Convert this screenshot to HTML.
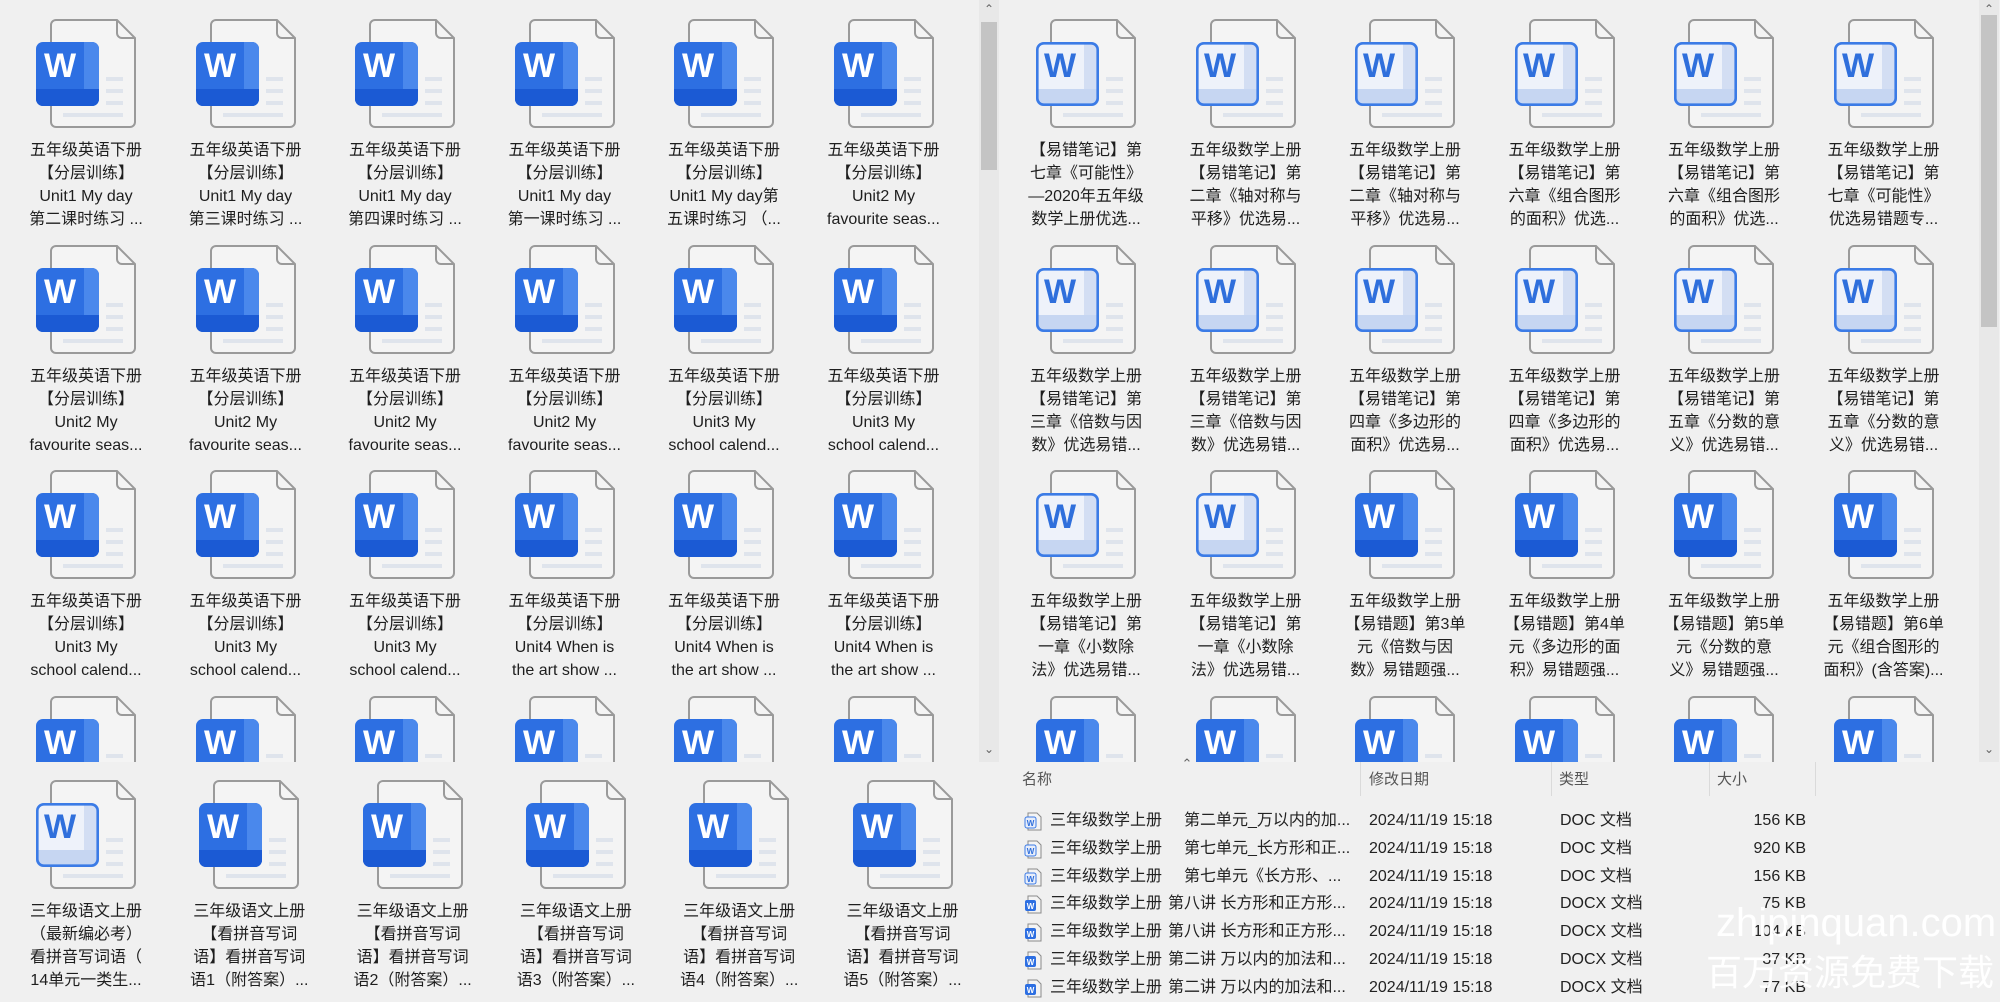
<!DOCTYPE html>
<html><head><meta charset="utf-8">
<style>
*{margin:0;padding:0;box-sizing:border-box}
body{width:2000px;height:1000px;background:#f0f0f0;position:relative;overflow:hidden;font-family:"Liberation Sans","Noto Sans CJK SC",sans-serif;color:#1e1e1e}
.pan{position:absolute;top:0;height:762px;width:980px;overflow:hidden}
.ic{position:absolute;width:100px;height:110px;overflow:visible}
.t{position:absolute;width:150px;text-align:center;font-size:16px;line-height:23px;white-space:nowrap}
.sb{position:absolute;top:0;width:20px;height:762px;background:#e8e8e8}
.th{position:absolute;left:2px;width:16px;background:#c4c4c4}
.ar{position:absolute;left:0;width:20px;text-align:center;font-size:12px;color:#666}
.h{position:absolute;font-size:15px;color:#555;top:768px}
.sep{position:absolute;top:762px;width:1px;height:34px;background:#dadada}
.r{position:absolute;font-size:16px;line-height:28px;white-space:nowrap;color:#222}
.wm{position:absolute;color:rgba(255,255,255,.95);white-space:nowrap}
</style></head><body>
<svg width="0" height="0" style="position:absolute">
<defs>
<clipPath id="cb"><rect x="0" y="23" width="63" height="64" rx="7"/></clipPath>
<symbol id="ps" viewBox="0 0 100 110" overflow="visible">
<path d="M20 1H81L99 19V103a5 5 0 0 1-5 5H20a5 5 0 0 1-5-5V6a5 5 0 0 1 5-5Z" fill="#f4f4f4" stroke="#9a9a9a" stroke-width="2"/>
<path d="M81 1V14a5 5 0 0 0 5 5H99" fill="none" stroke="#9a9a9a" stroke-width="2"/>
<rect x="70" y="58" width="17" height="4" fill="#dfe4ec"/><rect x="70" y="70" width="17" height="4" fill="#dfe4ec"/><rect x="70" y="82" width="17" height="4" fill="#dfe4ec"/><rect x="27" y="94" width="60" height="4" fill="#dfe4ec"/>
</symbol>
<symbol id="bs" viewBox="0 0 100 110" overflow="visible">
<g clip-path="url(#cb)"><rect x="0" y="23" width="63" height="64" fill="#2d6fe2"/><rect x="48" y="23" width="15" height="64" fill="#4a88ec"/><rect x="0" y="70" width="63" height="17" fill="#1b5ad4"/></g>
</symbol>
<symbol id="bo" viewBox="0 0 100 110" overflow="visible">
<g clip-path="url(#cb)"><rect x="0" y="23" width="63" height="64" fill="#eef2fa"/><rect x="48" y="23" width="15" height="64" fill="#d3def3"/><rect x="0" y="70" width="63" height="17" fill="#c6d6f2"/></g>
<rect x="1.3" y="24.3" width="60.4" height="61.4" rx="6.5" fill="none" stroke="#3b7be6" stroke-width="2.6"/>
</symbol>
<symbol id="sm" viewBox="0 0 20 20"><path d="M5 1H14L18 5V18H5Z" fill="#f4f4f4" stroke="#8a8a8a"/><rect x="2" y="5" width="11" height="11" rx="2" fill="#e8eefa" stroke="#3b7be6"/></symbol>
</defs></svg>

<!-- LEFT PANEL -->
<div class="pan" style="left:0">
<svg class="ic" style="left:36px;top:19px"><use href="#ps"/><use href="#bs"/><text x="24" y="58" font-size="34" font-weight="bold" fill="#fff" text-anchor="middle" font-family="Liberation Sans">W</text></svg>
<svg class="ic" style="left:195.5px;top:19px"><use href="#ps"/><use href="#bs"/><text x="24" y="58" font-size="34" font-weight="bold" fill="#fff" text-anchor="middle" font-family="Liberation Sans">W</text></svg>
<svg class="ic" style="left:355px;top:19px"><use href="#ps"/><use href="#bs"/><text x="24" y="58" font-size="34" font-weight="bold" fill="#fff" text-anchor="middle" font-family="Liberation Sans">W</text></svg>
<svg class="ic" style="left:514.5px;top:19px"><use href="#ps"/><use href="#bs"/><text x="24" y="58" font-size="34" font-weight="bold" fill="#fff" text-anchor="middle" font-family="Liberation Sans">W</text></svg>
<svg class="ic" style="left:674px;top:19px"><use href="#ps"/><use href="#bs"/><text x="24" y="58" font-size="34" font-weight="bold" fill="#fff" text-anchor="middle" font-family="Liberation Sans">W</text></svg>
<svg class="ic" style="left:833.5px;top:19px"><use href="#ps"/><use href="#bs"/><text x="24" y="58" font-size="34" font-weight="bold" fill="#fff" text-anchor="middle" font-family="Liberation Sans">W</text></svg>
<div class="t" style="left:11px;top:139px">五年级英语下册<br>【分层训练】<br>Unit1 My day<br>第二课时练习 ...</div>
<div class="t" style="left:170.5px;top:139px">五年级英语下册<br>【分层训练】<br>Unit1 My day<br>第三课时练习 ...</div>
<div class="t" style="left:330px;top:139px">五年级英语下册<br>【分层训练】<br>Unit1 My day<br>第四课时练习 ...</div>
<div class="t" style="left:489.5px;top:139px">五年级英语下册<br>【分层训练】<br>Unit1 My day<br>第一课时练习 ...</div>
<div class="t" style="left:649px;top:139px">五年级英语下册<br>【分层训练】<br>Unit1 My day第<br>五课时练习 （...</div>
<div class="t" style="left:808.5px;top:139px">五年级英语下册<br>【分层训练】<br>Unit2 My<br>favourite seas...</div>

<svg class="ic" style="left:36px;top:244.5px"><use href="#ps"/><use href="#bs"/><text x="24" y="58" font-size="34" font-weight="bold" fill="#fff" text-anchor="middle" font-family="Liberation Sans">W</text></svg>
<svg class="ic" style="left:195.5px;top:244.5px"><use href="#ps"/><use href="#bs"/><text x="24" y="58" font-size="34" font-weight="bold" fill="#fff" text-anchor="middle" font-family="Liberation Sans">W</text></svg>
<svg class="ic" style="left:355px;top:244.5px"><use href="#ps"/><use href="#bs"/><text x="24" y="58" font-size="34" font-weight="bold" fill="#fff" text-anchor="middle" font-family="Liberation Sans">W</text></svg>
<svg class="ic" style="left:514.5px;top:244.5px"><use href="#ps"/><use href="#bs"/><text x="24" y="58" font-size="34" font-weight="bold" fill="#fff" text-anchor="middle" font-family="Liberation Sans">W</text></svg>
<svg class="ic" style="left:674px;top:244.5px"><use href="#ps"/><use href="#bs"/><text x="24" y="58" font-size="34" font-weight="bold" fill="#fff" text-anchor="middle" font-family="Liberation Sans">W</text></svg>
<svg class="ic" style="left:833.5px;top:244.5px"><use href="#ps"/><use href="#bs"/><text x="24" y="58" font-size="34" font-weight="bold" fill="#fff" text-anchor="middle" font-family="Liberation Sans">W</text></svg>
<div class="t" style="left:11px;top:364.5px">五年级英语下册<br>【分层训练】<br>Unit2 My<br>favourite seas...</div>
<div class="t" style="left:170.5px;top:364.5px">五年级英语下册<br>【分层训练】<br>Unit2 My<br>favourite seas...</div>
<div class="t" style="left:330px;top:364.5px">五年级英语下册<br>【分层训练】<br>Unit2 My<br>favourite seas...</div>
<div class="t" style="left:489.5px;top:364.5px">五年级英语下册<br>【分层训练】<br>Unit2 My<br>favourite seas...</div>
<div class="t" style="left:649px;top:364.5px">五年级英语下册<br>【分层训练】<br>Unit3 My<br>school calend...</div>
<div class="t" style="left:808.5px;top:364.5px">五年级英语下册<br>【分层训练】<br>Unit3 My<br>school calend...</div>

<svg class="ic" style="left:36px;top:470px"><use href="#ps"/><use href="#bs"/><text x="24" y="58" font-size="34" font-weight="bold" fill="#fff" text-anchor="middle" font-family="Liberation Sans">W</text></svg>
<svg class="ic" style="left:195.5px;top:470px"><use href="#ps"/><use href="#bs"/><text x="24" y="58" font-size="34" font-weight="bold" fill="#fff" text-anchor="middle" font-family="Liberation Sans">W</text></svg>
<svg class="ic" style="left:355px;top:470px"><use href="#ps"/><use href="#bs"/><text x="24" y="58" font-size="34" font-weight="bold" fill="#fff" text-anchor="middle" font-family="Liberation Sans">W</text></svg>
<svg class="ic" style="left:514.5px;top:470px"><use href="#ps"/><use href="#bs"/><text x="24" y="58" font-size="34" font-weight="bold" fill="#fff" text-anchor="middle" font-family="Liberation Sans">W</text></svg>
<svg class="ic" style="left:674px;top:470px"><use href="#ps"/><use href="#bs"/><text x="24" y="58" font-size="34" font-weight="bold" fill="#fff" text-anchor="middle" font-family="Liberation Sans">W</text></svg>
<svg class="ic" style="left:833.5px;top:470px"><use href="#ps"/><use href="#bs"/><text x="24" y="58" font-size="34" font-weight="bold" fill="#fff" text-anchor="middle" font-family="Liberation Sans">W</text></svg>
<div class="t" style="left:11px;top:590px">五年级英语下册<br>【分层训练】<br>Unit3 My<br>school calend...</div>
<div class="t" style="left:170.5px;top:590px">五年级英语下册<br>【分层训练】<br>Unit3 My<br>school calend...</div>
<div class="t" style="left:330px;top:590px">五年级英语下册<br>【分层训练】<br>Unit3 My<br>school calend...</div>
<div class="t" style="left:489.5px;top:590px">五年级英语下册<br>【分层训练】<br>Unit4 When is<br>the art show ...</div>
<div class="t" style="left:649px;top:590px">五年级英语下册<br>【分层训练】<br>Unit4 When is<br>the art show ...</div>
<div class="t" style="left:808.5px;top:590px">五年级英语下册<br>【分层训练】<br>Unit4 When is<br>the art show ...</div>

<svg class="ic" style="left:36px;top:695.5px"><use href="#ps"/><use href="#bs"/><text x="24" y="58" font-size="34" font-weight="bold" fill="#fff" text-anchor="middle" font-family="Liberation Sans">W</text></svg>
<svg class="ic" style="left:195.5px;top:695.5px"><use href="#ps"/><use href="#bs"/><text x="24" y="58" font-size="34" font-weight="bold" fill="#fff" text-anchor="middle" font-family="Liberation Sans">W</text></svg>
<svg class="ic" style="left:355px;top:695.5px"><use href="#ps"/><use href="#bs"/><text x="24" y="58" font-size="34" font-weight="bold" fill="#fff" text-anchor="middle" font-family="Liberation Sans">W</text></svg>
<svg class="ic" style="left:514.5px;top:695.5px"><use href="#ps"/><use href="#bs"/><text x="24" y="58" font-size="34" font-weight="bold" fill="#fff" text-anchor="middle" font-family="Liberation Sans">W</text></svg>
<svg class="ic" style="left:674px;top:695.5px"><use href="#ps"/><use href="#bs"/><text x="24" y="58" font-size="34" font-weight="bold" fill="#fff" text-anchor="middle" font-family="Liberation Sans">W</text></svg>
<svg class="ic" style="left:833.5px;top:695.5px"><use href="#ps"/><use href="#bs"/><text x="24" y="58" font-size="34" font-weight="bold" fill="#fff" text-anchor="middle" font-family="Liberation Sans">W</text></svg>
</div>
<div class="sb" style="left:979px"><div class="ar" style="top:2px">&#8963;</div><div class="th" style="top:22px;height:148px"></div><div class="ar" style="top:742px">&#8964;</div></div>

<!-- RIGHT PANEL -->
<div class="pan" style="left:1000px">
<svg class="ic" style="left:36px;top:19px"><use href="#ps"/><use href="#bo"/><text x="24" y="58" font-size="34" font-weight="bold" fill="#2f6fdc" text-anchor="middle" font-family="Liberation Sans">W</text></svg>
<svg class="ic" style="left:195.5px;top:19px"><use href="#ps"/><use href="#bo"/><text x="24" y="58" font-size="34" font-weight="bold" fill="#2f6fdc" text-anchor="middle" font-family="Liberation Sans">W</text></svg>
<svg class="ic" style="left:355px;top:19px"><use href="#ps"/><use href="#bo"/><text x="24" y="58" font-size="34" font-weight="bold" fill="#2f6fdc" text-anchor="middle" font-family="Liberation Sans">W</text></svg>
<svg class="ic" style="left:514.5px;top:19px"><use href="#ps"/><use href="#bo"/><text x="24" y="58" font-size="34" font-weight="bold" fill="#2f6fdc" text-anchor="middle" font-family="Liberation Sans">W</text></svg>
<svg class="ic" style="left:674px;top:19px"><use href="#ps"/><use href="#bo"/><text x="24" y="58" font-size="34" font-weight="bold" fill="#2f6fdc" text-anchor="middle" font-family="Liberation Sans">W</text></svg>
<svg class="ic" style="left:833.5px;top:19px"><use href="#ps"/><use href="#bo"/><text x="24" y="58" font-size="34" font-weight="bold" fill="#2f6fdc" text-anchor="middle" font-family="Liberation Sans">W</text></svg>
<div class="t" style="left:11px;top:139px">【易错笔记】第<br>七章《可能性》<br>—2020年五年级<br>数学上册优选...</div>
<div class="t" style="left:170.5px;top:139px">五年级数学上册<br>【易错笔记】第<br>二章《轴对称与<br>平移》优选易...</div>
<div class="t" style="left:330px;top:139px">五年级数学上册<br>【易错笔记】第<br>二章《轴对称与<br>平移》优选易...</div>
<div class="t" style="left:489.5px;top:139px">五年级数学上册<br>【易错笔记】第<br>六章《组合图形<br>的面积》优选...</div>
<div class="t" style="left:649px;top:139px">五年级数学上册<br>【易错笔记】第<br>六章《组合图形<br>的面积》优选...</div>
<div class="t" style="left:808.5px;top:139px">五年级数学上册<br>【易错笔记】第<br>七章《可能性》<br>优选易错题专...</div>

<svg class="ic" style="left:36px;top:244.5px"><use href="#ps"/><use href="#bo"/><text x="24" y="58" font-size="34" font-weight="bold" fill="#2f6fdc" text-anchor="middle" font-family="Liberation Sans">W</text></svg>
<svg class="ic" style="left:195.5px;top:244.5px"><use href="#ps"/><use href="#bo"/><text x="24" y="58" font-size="34" font-weight="bold" fill="#2f6fdc" text-anchor="middle" font-family="Liberation Sans">W</text></svg>
<svg class="ic" style="left:355px;top:244.5px"><use href="#ps"/><use href="#bo"/><text x="24" y="58" font-size="34" font-weight="bold" fill="#2f6fdc" text-anchor="middle" font-family="Liberation Sans">W</text></svg>
<svg class="ic" style="left:514.5px;top:244.5px"><use href="#ps"/><use href="#bo"/><text x="24" y="58" font-size="34" font-weight="bold" fill="#2f6fdc" text-anchor="middle" font-family="Liberation Sans">W</text></svg>
<svg class="ic" style="left:674px;top:244.5px"><use href="#ps"/><use href="#bo"/><text x="24" y="58" font-size="34" font-weight="bold" fill="#2f6fdc" text-anchor="middle" font-family="Liberation Sans">W</text></svg>
<svg class="ic" style="left:833.5px;top:244.5px"><use href="#ps"/><use href="#bo"/><text x="24" y="58" font-size="34" font-weight="bold" fill="#2f6fdc" text-anchor="middle" font-family="Liberation Sans">W</text></svg>
<div class="t" style="left:11px;top:364.5px">五年级数学上册<br>【易错笔记】第<br>三章《倍数与因<br>数》优选易错...</div>
<div class="t" style="left:170.5px;top:364.5px">五年级数学上册<br>【易错笔记】第<br>三章《倍数与因<br>数》优选易错...</div>
<div class="t" style="left:330px;top:364.5px">五年级数学上册<br>【易错笔记】第<br>四章《多边形的<br>面积》优选易...</div>
<div class="t" style="left:489.5px;top:364.5px">五年级数学上册<br>【易错笔记】第<br>四章《多边形的<br>面积》优选易...</div>
<div class="t" style="left:649px;top:364.5px">五年级数学上册<br>【易错笔记】第<br>五章《分数的意<br>义》优选易错...</div>
<div class="t" style="left:808.5px;top:364.5px">五年级数学上册<br>【易错笔记】第<br>五章《分数的意<br>义》优选易错...</div>

<svg class="ic" style="left:36px;top:470px"><use href="#ps"/><use href="#bo"/><text x="24" y="58" font-size="34" font-weight="bold" fill="#2f6fdc" text-anchor="middle" font-family="Liberation Sans">W</text></svg>
<svg class="ic" style="left:195.5px;top:470px"><use href="#ps"/><use href="#bo"/><text x="24" y="58" font-size="34" font-weight="bold" fill="#2f6fdc" text-anchor="middle" font-family="Liberation Sans">W</text></svg>
<svg class="ic" style="left:355px;top:470px"><use href="#ps"/><use href="#bs"/><text x="24" y="58" font-size="34" font-weight="bold" fill="#fff" text-anchor="middle" font-family="Liberation Sans">W</text></svg>
<svg class="ic" style="left:514.5px;top:470px"><use href="#ps"/><use href="#bs"/><text x="24" y="58" font-size="34" font-weight="bold" fill="#fff" text-anchor="middle" font-family="Liberation Sans">W</text></svg>
<svg class="ic" style="left:674px;top:470px"><use href="#ps"/><use href="#bs"/><text x="24" y="58" font-size="34" font-weight="bold" fill="#fff" text-anchor="middle" font-family="Liberation Sans">W</text></svg>
<svg class="ic" style="left:833.5px;top:470px"><use href="#ps"/><use href="#bs"/><text x="24" y="58" font-size="34" font-weight="bold" fill="#fff" text-anchor="middle" font-family="Liberation Sans">W</text></svg>
<div class="t" style="left:11px;top:590px">五年级数学上册<br>【易错笔记】第<br>一章《小数除<br>法》优选易错...</div>
<div class="t" style="left:170.5px;top:590px">五年级数学上册<br>【易错笔记】第<br>一章《小数除<br>法》优选易错...</div>
<div class="t" style="left:330px;top:590px">五年级数学上册<br>【易错题】第3单<br>元《倍数与因<br>数》易错题强...</div>
<div class="t" style="left:489.5px;top:590px">五年级数学上册<br>【易错题】第4单<br>元《多边形的面<br>积》易错题强...</div>
<div class="t" style="left:649px;top:590px">五年级数学上册<br>【易错题】第5单<br>元《分数的意<br>义》易错题强...</div>
<div class="t" style="left:808.5px;top:590px">五年级数学上册<br>【易错题】第6单<br>元《组合图形的<br>面积》(含答案)...</div>

<svg class="ic" style="left:36px;top:695.5px"><use href="#ps"/><use href="#bs"/><text x="24" y="58" font-size="34" font-weight="bold" fill="#fff" text-anchor="middle" font-family="Liberation Sans">W</text></svg>
<svg class="ic" style="left:195.5px;top:695.5px"><use href="#ps"/><use href="#bs"/><text x="24" y="58" font-size="34" font-weight="bold" fill="#fff" text-anchor="middle" font-family="Liberation Sans">W</text></svg>
<svg class="ic" style="left:355px;top:695.5px"><use href="#ps"/><use href="#bs"/><text x="24" y="58" font-size="34" font-weight="bold" fill="#fff" text-anchor="middle" font-family="Liberation Sans">W</text></svg>
<svg class="ic" style="left:514.5px;top:695.5px"><use href="#ps"/><use href="#bs"/><text x="24" y="58" font-size="34" font-weight="bold" fill="#fff" text-anchor="middle" font-family="Liberation Sans">W</text></svg>
<svg class="ic" style="left:674px;top:695.5px"><use href="#ps"/><use href="#bs"/><text x="24" y="58" font-size="34" font-weight="bold" fill="#fff" text-anchor="middle" font-family="Liberation Sans">W</text></svg>
<svg class="ic" style="left:833.5px;top:695.5px"><use href="#ps"/><use href="#bs"/><text x="24" y="58" font-size="34" font-weight="bold" fill="#fff" text-anchor="middle" font-family="Liberation Sans">W</text></svg>
</div>
<div class="sb" style="left:1979px"><div class="ar" style="top:2px">&#8963;</div><div class="th" style="top:15px;height:312px"></div><div class="ar" style="top:742px">&#8964;</div></div>

<!-- BOTTOM LEFT -->
<svg class="ic" style="left:36px;top:780px"><use href="#ps"/><use href="#bo"/><text x="24" y="58" font-size="34" font-weight="bold" fill="#2f6fdc" text-anchor="middle" font-family="Liberation Sans">W</text></svg>
<svg class="ic" style="left:199.3px;top:780px"><use href="#ps"/><use href="#bs"/><text x="24" y="58" font-size="34" font-weight="bold" fill="#fff" text-anchor="middle" font-family="Liberation Sans">W</text></svg>
<svg class="ic" style="left:362.6px;top:780px"><use href="#ps"/><use href="#bs"/><text x="24" y="58" font-size="34" font-weight="bold" fill="#fff" text-anchor="middle" font-family="Liberation Sans">W</text></svg>
<svg class="ic" style="left:525.9px;top:780px"><use href="#ps"/><use href="#bs"/><text x="24" y="58" font-size="34" font-weight="bold" fill="#fff" text-anchor="middle" font-family="Liberation Sans">W</text></svg>
<svg class="ic" style="left:689.2px;top:780px"><use href="#ps"/><use href="#bs"/><text x="24" y="58" font-size="34" font-weight="bold" fill="#fff" text-anchor="middle" font-family="Liberation Sans">W</text></svg>
<svg class="ic" style="left:852.5px;top:780px"><use href="#ps"/><use href="#bs"/><text x="24" y="58" font-size="34" font-weight="bold" fill="#fff" text-anchor="middle" font-family="Liberation Sans">W</text></svg>
<div class="t" style="left:11px;top:900px">三年级语文上册<br>（最新编必考）<br>看拼音写词语（<br>14单元一类生...</div>
<div class="t" style="left:174.3px;top:900px">三年级语文上册<br>【看拼音写词<br>语】看拼音写词<br>语1（附答案）...</div>
<div class="t" style="left:337.6px;top:900px">三年级语文上册<br>【看拼音写词<br>语】看拼音写词<br>语2（附答案）...</div>
<div class="t" style="left:500.9px;top:900px">三年级语文上册<br>【看拼音写词<br>语】看拼音写词<br>语3（附答案）...</div>
<div class="t" style="left:664.2px;top:900px">三年级语文上册<br>【看拼音写词<br>语】看拼音写词<br>语4（附答案）...</div>
<div class="t" style="left:827.5px;top:900px">三年级语文上册<br>【看拼音写词<br>语】看拼音写词<br>语5（附答案）...</div>

<!-- DETAILS -->
<div class="ar" style="left:1177px;top:756px;font-size:13px">&#8963;</div>
<div class="h" style="left:1022px">名称</div>
<div class="h" style="left:1369px">修改日期</div>
<div class="h" style="left:1559px">类型</div>
<div class="h" style="left:1717px">大小</div>
<div class="sep" style="left:1360px"></div><div class="sep" style="left:1551px"></div><div class="sep" style="left:1709px"></div><div class="sep" style="left:1815px"></div>

<svg style="position:absolute;left:1023px;top:812px" width="20" height="20"><use href="#sm"/><text x="7.5" y="14" font-size="8" font-weight="bold" fill="#2f6fdc" text-anchor="middle">W</text></svg>
<svg style="position:absolute;left:1023px;top:840px" width="20" height="20"><use href="#sm"/><text x="7.5" y="14" font-size="8" font-weight="bold" fill="#2f6fdc" text-anchor="middle">W</text></svg>
<svg style="position:absolute;left:1023px;top:868px" width="20" height="20"><use href="#sm"/><text x="7.5" y="14" font-size="8" font-weight="bold" fill="#2f6fdc" text-anchor="middle">W</text></svg>
<svg style="position:absolute;left:1023px;top:895px" width="20" height="20"><path d="M5 1H14L18 5V18H5Z" fill="#f4f4f4" stroke="#8a8a8a"/><rect x="2" y="5" width="11" height="11" rx="2" fill="#2d6fe2"/><text x="7.5" y="14" font-size="8" font-weight="bold" fill="#fff" text-anchor="middle">W</text></svg>
<svg style="position:absolute;left:1023px;top:923px" width="20" height="20"><path d="M5 1H14L18 5V18H5Z" fill="#f4f4f4" stroke="#8a8a8a"/><rect x="2" y="5" width="11" height="11" rx="2" fill="#2d6fe2"/><text x="7.5" y="14" font-size="8" font-weight="bold" fill="#fff" text-anchor="middle">W</text></svg>
<svg style="position:absolute;left:1023px;top:951px" width="20" height="20"><path d="M5 1H14L18 5V18H5Z" fill="#f4f4f4" stroke="#8a8a8a"/><rect x="2" y="5" width="11" height="11" rx="2" fill="#2d6fe2"/><text x="7.5" y="14" font-size="8" font-weight="bold" fill="#fff" text-anchor="middle">W</text></svg>
<svg style="position:absolute;left:1023px;top:979px" width="20" height="20"><path d="M5 1H14L18 5V18H5Z" fill="#f4f4f4" stroke="#8a8a8a"/><rect x="2" y="5" width="11" height="11" rx="2" fill="#2d6fe2"/><text x="7.5" y="14" font-size="8" font-weight="bold" fill="#fff" text-anchor="middle">W</text></svg>

<div class="r" style="left:1050px;top:807px">三年级数学上册</div><div class="r" style="left:1184px;top:807px">第二单元_万以内的加...</div><div class="r" style="left:1369px;top:807px">2024/11/19 15:18</div><div class="r" style="left:1560px;top:807px">DOC 文档</div><div class="r" style="left:1706px;top:807px;width:100px;text-align:right">156 KB</div>
<div class="r" style="left:1050px;top:835px">三年级数学上册</div><div class="r" style="left:1184px;top:835px">第七单元_长方形和正...</div><div class="r" style="left:1369px;top:835px">2024/11/19 15:18</div><div class="r" style="left:1560px;top:835px">DOC 文档</div><div class="r" style="left:1706px;top:835px;width:100px;text-align:right">920 KB</div>
<div class="r" style="left:1050px;top:863px">三年级数学上册</div><div class="r" style="left:1184px;top:863px">第七单元《长方形、...</div><div class="r" style="left:1369px;top:863px">2024/11/19 15:18</div><div class="r" style="left:1560px;top:863px">DOC 文档</div><div class="r" style="left:1706px;top:863px;width:100px;text-align:right">156 KB</div>
<div class="r" style="left:1050px;top:890px">三年级数学上册</div><div class="r" style="left:1168px;top:890px">第八讲 长方形和正方形...</div><div class="r" style="left:1369px;top:890px">2024/11/19 15:18</div><div class="r" style="left:1560px;top:890px">DOCX 文档</div><div class="r" style="left:1706px;top:890px;width:100px;text-align:right">75 KB</div>
<div class="r" style="left:1050px;top:918px">三年级数学上册</div><div class="r" style="left:1168px;top:918px">第八讲 长方形和正方形...</div><div class="r" style="left:1369px;top:918px">2024/11/19 15:18</div><div class="r" style="left:1560px;top:918px">DOCX 文档</div><div class="r" style="left:1706px;top:918px;width:100px;text-align:right">104 KB</div>
<div class="r" style="left:1050px;top:946px">三年级数学上册</div><div class="r" style="left:1168px;top:946px">第二讲 万以内的加法和...</div><div class="r" style="left:1369px;top:946px">2024/11/19 15:18</div><div class="r" style="left:1560px;top:946px">DOCX 文档</div><div class="r" style="left:1706px;top:946px;width:100px;text-align:right">37 KB</div>
<div class="r" style="left:1050px;top:974px">三年级数学上册</div><div class="r" style="left:1168px;top:974px">第二讲 万以内的加法和...</div><div class="r" style="left:1369px;top:974px">2024/11/19 15:18</div><div class="r" style="left:1560px;top:974px">DOCX 文档</div><div class="r" style="left:1706px;top:974px;width:100px;text-align:right">77 KB</div>

<div class="wm" style="left:1716px;top:899px;font-size:40px;line-height:48px">zhipinquan.com</div>
<div class="wm" style="left:1706px;top:952px;font-size:36px;line-height:42px">百万资源免费下载</div>
</body></html>
